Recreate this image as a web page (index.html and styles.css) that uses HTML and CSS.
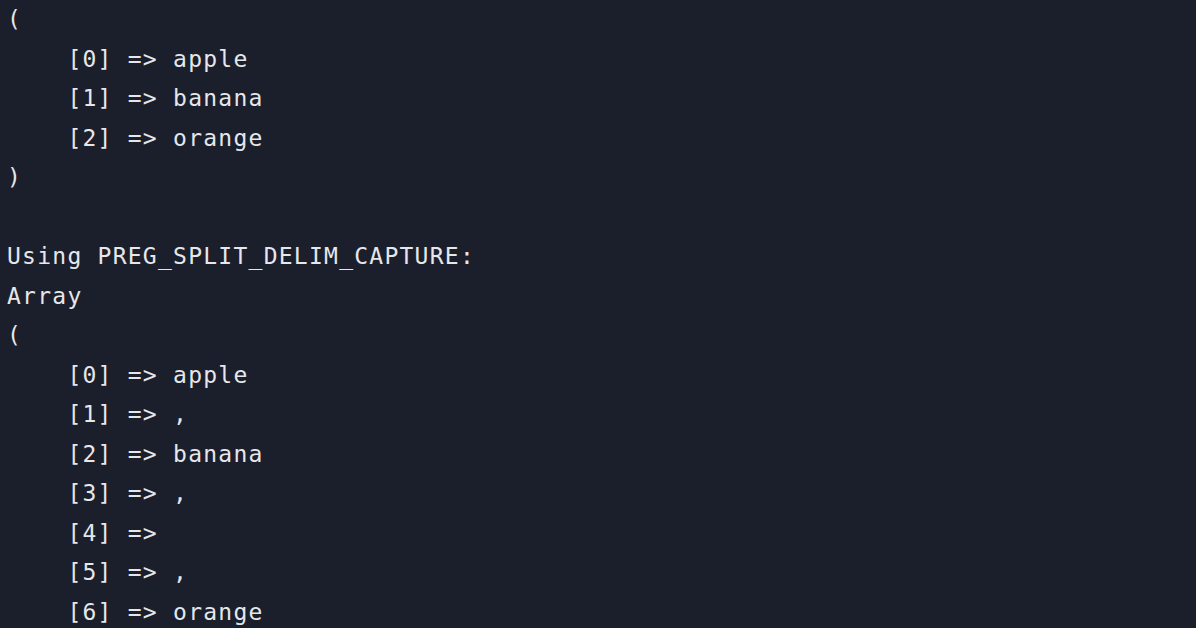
FILE: index.html
```html
<!DOCTYPE html>
<html>
<head>
<meta charset="utf-8">
<link rel="stylesheet" href="styles.css">
</head>
<body>
<pre class="output">(
    [0] =&gt; apple
    [1] =&gt; banana
    [2] =&gt; orange
)

Using PREG_SPLIT_DELIM_CAPTURE:
Array
(
    [0] =&gt; apple
    [1] =&gt; ,
    [2] =&gt; banana
    [3] =&gt; ,
    [4] =&gt; 
    [5] =&gt; ,
    [6] =&gt; orange</pre>
</body>
</html>
```
FILE: styles.css
```css
html, body {
  margin: 0;
  padding: 0;
  background: #1b1e2b;
  height: 100%;
  overflow: hidden;
}
.output {
  margin: 0;
  padding: 0 0 0 7px;
  font-family: "DejaVu Sans Mono", monospace;
  font-size: 23px;
  letter-spacing: 1.25px;
  line-height: 39.5px;
  color: #e6e7ea;
}
```
